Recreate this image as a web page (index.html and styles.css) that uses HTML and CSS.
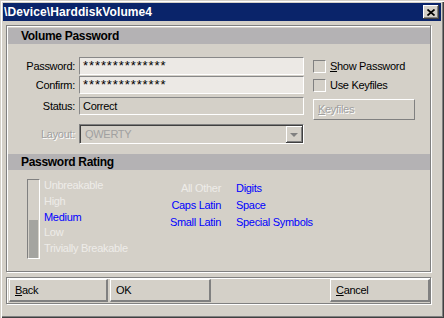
FILE: index.html
```html
<!DOCTYPE html>
<html lang="en">
<head>
    <meta charset="UTF-8">
    <meta name="viewport" content="width=device-width, initial-scale=1.0">
    <title>\Device\HarddiskVolume4</title>
    <link rel="stylesheet" href="styles.css">
</head>
<body>
    <div class="window">
        <div class="titlebar">
            <span class="title">\Device\HarddiskVolume4</span>
            <span class="close">
                <svg width="8" height="7" viewBox="0 0 8 7"><path d="M0.5 0.5 L7.5 6.5 M7.5 0.5 L0.5 6.5" stroke="#000" stroke-width="1.7" fill="none"/></svg>
            </span>
        </div>
        <div class="content">
            <div class="group main">
                <div class="band">Volume Password</div>
                <div class="pw-grid">
                    <div class="lbl">Password:</div>
                    <div class="field edit">**************</div>
                    <div class="check"><span class="box"></span><u>S</u>how Password</div>

                    <div class="lbl">Confirm:</div>
                    <div class="field edit">**************</div>
                    <div class="check"><span class="box"></span>Use Keyfiles</div>

                    <div class="lbl">Status:</div>
                    <div class="field">Correct</div>
                    <div class="btn disabled keyfiles"><u>K</u>eyfiles</div>

                    <div class="lbl disabled tall">Layout:</div>
                    <div class="combo">QWERTY<span class="drop"><span class="arrow"></span></span></div>
                </div>
                <div class="band rating-band">Password Rating</div>
                <div class="rating">
                    <div class="gauge"><div class="gauge-fill" style="height: 38px"></div></div>
                    <div class="levels">
                        <div class="off">Unbreakable</div>
                        <div class="off">High</div>
                        <div class="on">Medium</div>
                        <div class="off">Low</div>
                        <div class="off">Trivially Breakable</div>
                    </div>
                    <div class="chars">
                        <div class="off right">All Other</div>
                        <div class="on">Digits</div>
                        <div class="on right">Caps Latin</div>
                        <div class="on">Space</div>
                        <div class="on right">Small Latin</div>
                        <div class="on">Special Symbols</div>
                    </div>
                </div>
            </div>
            <div class="group buttons">
                <button class="btn wide"><u>B</u>ack</button>
                <button class="btn wide ok">OK</button>
                <button class="btn wide cancel"><u>C</u>ancel</button>
            </div>
        </div>
    </div>
</body>
</html>
```
FILE: styles.css
```css
body {
    margin: 0;
    background-color: #d4d0c8;
    font-family: "Liberation Sans", Arial, sans-serif;
    font-size: 11px;
    letter-spacing: -0.3px;
    color: #000;
}

.window {
    width: 444px;
    height: 318px;
    box-sizing: border-box;
    padding: 3px;
    background-color: #d4d0c8;
    box-shadow: inset 1px 1px #d4d0c8, inset 2px 2px #fff, inset -1px -1px #404040, inset -2px -2px #808080;
}

.titlebar {
    height: 18px;
    background-color: #0a246a;
    display: flex;
    align-items: center;
    justify-content: space-between;
    padding: 0 2px 0 1px;
}

.title {
    color: #fff;
    font-weight: bold;
    font-size: 12px;
    letter-spacing: 0.1px;
}

.close {
    width: 16px;
    height: 14px;
    box-sizing: border-box;
    background-color: #d4d0c8;
    box-shadow: inset -1px -1px #404040, inset 1px 1px #fff, inset -2px -2px #808080;
    display: flex;
    align-items: center;
    justify-content: center;
    padding-right: 1px;
}

.content {
    padding: 4px 10px 0 3px;
}

.group {
    border: 1px solid #808080;
    box-shadow: inset 1px 1px #fff, 1px 1px #fff;
}

.main {
    height: 247px;
    box-sizing: border-box;
    padding: 2px 0 0 1px;
}

.band {
    height: 16px;
    line-height: 16px;
    background-color: #b4b2b4;
    padding-left: 13px;
    font-weight: bold;
    font-size: 12px;
}

.pw-grid {
    display: grid;
    grid-template-columns: 67px 225px auto;
    grid-template-rows: 19px 21px 27px 20px;
    column-gap: 4px;
    align-items: start;
    margin-top: 13px;
}

.lbl {
    text-align: right;
    line-height: 18px;
}

.lbl.tall {
    line-height: 20px;
}

.disabled {
    color: #a0a0a0;
    text-shadow: 1px 1px #fff;
}

.field {
    height: 18px;
    box-sizing: border-box;
    border: 1px solid;
    border-color: #888 #fff #fff #888;
    padding-left: 3px;
    line-height: 16px;
}

.edit {
    background-color: #ece9e5;
    font-size: 13px;
    letter-spacing: 0.9px;
}

.check {
    display: flex;
    align-items: center;
    height: 18px;
    margin-left: 5px;
}

.box {
    width: 13px;
    height: 13px;
    box-sizing: border-box;
    border: 1px solid;
    border-color: #808080 #fff #fff #808080;
    margin-right: 4px;
}

.btn {
    box-sizing: border-box;
    background-color: #d4d0c8;
    border: 1px solid;
    border-color: #fff #808080 #808080 #fff;
    font: inherit;
    letter-spacing: inherit;
    color: #000;
    padding: 0 0 0 5px;
    text-align: left;
}

.keyfiles {
    width: 102px;
    height: 21px;
    margin: 2px 0 0 5px;
    padding-left: 4px;
    line-height: 19px;
    color: #a0a0a0;
}

.combo {
    height: 20px;
    box-sizing: border-box;
    border: 1px solid;
    border-color: #808080 #fff #fff #808080;
    box-shadow: inset 1px 1px #404040;
    display: flex;
    align-items: center;
    justify-content: space-between;
    padding-left: 5px;
    color: #a0a0a0;
}

.drop {
    width: 17px;
    height: 17px;
    margin-top: 1px;
    box-sizing: border-box;
    background-color: #d4d0c8;
    box-shadow: inset -1px -1px #404040, inset 1px 1px #fff, inset -2px -2px #808080;
    display: flex;
    align-items: center;
    justify-content: center;
}

.arrow {
    width: 0;
    height: 0;
    border-left: 4px solid transparent;
    border-right: 4px solid transparent;
    border-top: 4px solid #808080;
    margin: 1px 1px 0 0;
}

.rating-band {
    margin-top: 10px;
}

.rating {
    display: flex;
    align-items: flex-start;
    padding-left: 19px;
    margin-top: 8px;
}

.gauge {
    width: 13px;
    height: 80px;
    box-sizing: border-box;
    margin-top: 1px;
    border: 1px solid;
    border-color: #808080 #fff #fff #808080;
    padding: 0 1px;
    display: flex;
    flex-direction: column;
    justify-content: flex-end;
}

.gauge-fill {
    background-color: #a4a4a0;
}

.levels {
    width: 100px;
    margin-left: 4px;
    line-height: 15.75px;
}

.chars {
    display: grid;
    grid-template-columns: 77px 120px;
    column-gap: 15px;
    line-height: 17px;
    margin-top: 2px;
}

.right {
    text-align: right;
}

.off {
    color: #eeece8;
}

.on {
    color: #0000ff;
}

.buttons {
    display: flex;
    gap: 2px;
    height: 27px;
    box-sizing: border-box;
    margin-top: 5px;
    padding: 1px 0 0 2px;
}

.wide {
    height: 23px;
    width: 99px;
    border-right-width: 2px;
    border-bottom-width: 2px;
}

.ok {
    width: 101px;
}

.cancel {
    width: 100px;
    margin-left: auto;
}
```
